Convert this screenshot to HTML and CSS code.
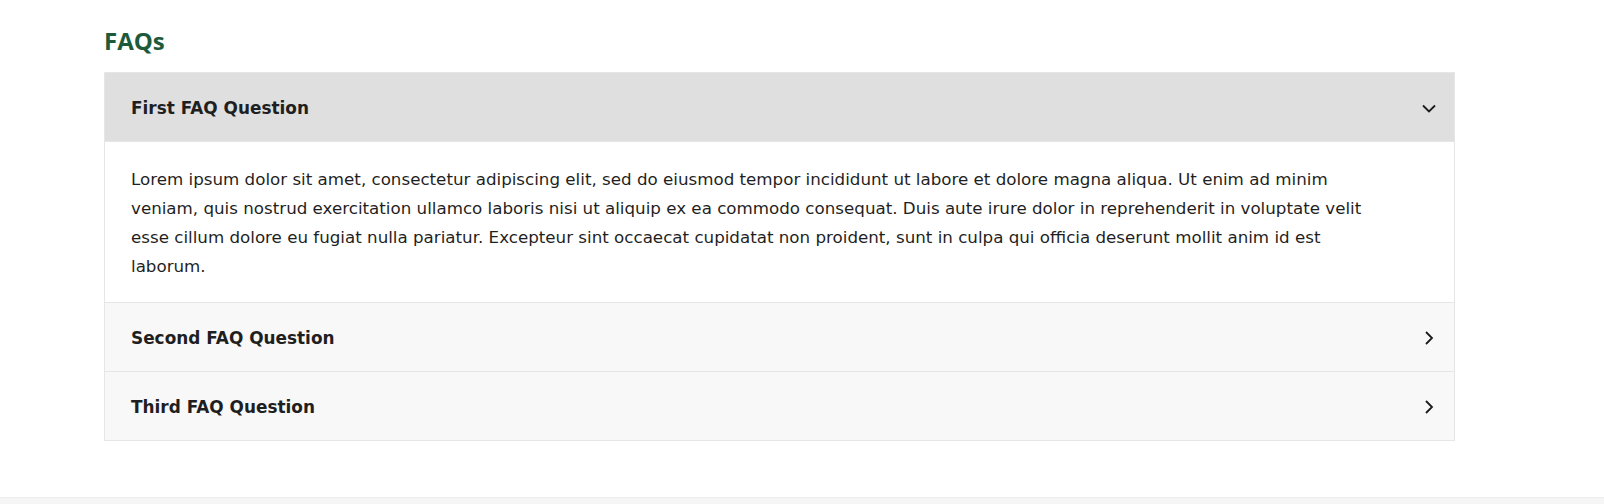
FILE: index.html
```html
<!DOCTYPE html>
<html lang="en">
<head>
<meta charset="utf-8">
<title>FAQs</title>
<link rel="stylesheet" href="styles.css">
</head>
<body>
<main class="page">
  <section class="faqs">
    <h2 class="faqs-title">FAQs</h2>
    <div class="accordion">
      <div class="item open">
        <div class="item-head">
          <span class="item-q">First FAQ Question</span>
          <svg class="chev" width="16" height="16" viewBox="0 0 16 16"><path d="M2 5.5 L8 11.5 L14 5.5" fill="none" stroke="#1a1a1a" stroke-width="1.8"/></svg>
        </div>
        <div class="item-body">
          <p>Lorem ipsum dolor sit amet, consectetur adipiscing elit, sed do eiusmod tempor incididunt ut labore et dolore magna aliqua. Ut enim ad minim veniam, quis nostrud exercitation ullamco laboris nisi ut aliquip ex ea commodo consequat. Duis aute irure dolor in reprehenderit in voluptate velit esse cillum dolore eu fugiat nulla pariatur. Excepteur sint occaecat cupidatat non proident, sunt in culpa qui officia deserunt mollit anim id est laborum.</p>
        </div>
      </div>
      <div class="item">
        <div class="item-head">
          <span class="item-q">Second FAQ Question</span>
          <svg class="chev" width="16" height="16" viewBox="0 0 16 16"><path d="M5 2 L11 8 L5 14" fill="none" stroke="#1a1a1a" stroke-width="1.8"/></svg>
        </div>
      </div>
      <div class="item">
        <div class="item-head">
          <span class="item-q">Third FAQ Question</span>
          <svg class="chev" width="16" height="16" viewBox="0 0 16 16"><path d="M5 2 L11 8 L5 14" fill="none" stroke="#1a1a1a" stroke-width="1.8"/></svg>
        </div>
      </div>
    </div>
  </section>
</main>
<footer class="footer"></footer>
</body>
</html>
```
FILE: styles.css
```css
* { box-sizing: border-box; }
html, body { margin: 0; padding: 0; background: #fff; }
body {
  font-family: "DejaVu Sans", "Open Sans", sans-serif;
  color: #1f1f1f;
}
.page {
  padding: 24px 149px 56px 104px;
}
.faqs-title {
  margin: 0 0 14px 0;
  font-family: "Open Sans", sans-serif;
  font-size: 24px;
  line-height: 34px;
  font-weight: 700;
  color: #1d5a3a;
}
.accordion {
  border: 1px solid #e6e6e6;
}
.item + .item { border-top: 1px solid #e6e6e6; }
.item-head {
  height: 68px;
  display: flex;
  align-items: center;
  justify-content: space-between;
  padding: 1px 17px 0 26px;
  background: #f8f8f8;
}
.item.open .item-head { background: #dfdfdf; }
.item-q {
  font-size: 16.9px;
  font-weight: 700;
}
.item-body {
  background: #fff;
  border-top: 1px solid #e6e6e6;
  padding: 23px 82px 21px 26px;
}
.item-body p {
  margin: 0;
  font-size: 16.7px;
  line-height: 29px;
}
.footer {
  height: 8px;
  background: #f5f5f5;
  border-top: 1px solid #ededed;
}
```
